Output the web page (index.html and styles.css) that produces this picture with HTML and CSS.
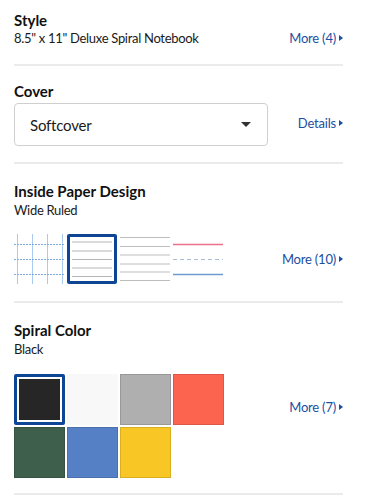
FILE: index.html
```html
<!DOCTYPE html>
<html lang="en">
<head>
  <meta charset="UTF-8">
  <meta name="viewport" content="width=device-width, initial-scale=1.0">
  <title>Notebook Options</title>
  <link rel="stylesheet" href="styles.css">
</head>
<body>
  <main class="options">
    <section class="option">
      <h2>Style</h2>
      <div class="option-row">
        <p class="value">8.5" x 11" Deluxe Spiral Notebook</p>
        <a class="more-link" href="#">More (4)<span class="arrow"></span></a>
      </div>
    </section>

    <section class="option cover">
      <h2>Cover</h2>
      <div class="option-row">
        <div class="select-box">
          <span>Softcover</span>
          <span class="caret"></span>
        </div>
        <a class="more-link" href="#">Details<span class="arrow"></span></a>
      </div>
    </section>

    <section class="option paper-design">
      <h2>Inside Paper Design</h2>
      <p class="value">Wide Ruled</p>
      <div class="option-row">
        <div class="paper-list">
          <!-- graph -->
          <div class="paper">
            <svg width="50" height="50" viewBox="0 0 50 50">
              <g stroke="#a9cbef" stroke-width="1">
                <line x1="3.5" y1="0" x2="3.5" y2="50"/>
                <line x1="18.5" y1="0" x2="18.5" y2="50"/>
                <line x1="33.5" y1="0" x2="33.5" y2="50"/>
                <line x1="48.5" y1="0" x2="48.5" y2="50"/>
              </g>
              <g stroke="#7fa9da" stroke-width="1" stroke-dasharray="2 1">
                <line x1="0" y1="10.5" x2="50" y2="10.5"/>
                <line x1="0" y1="25.5" x2="50" y2="25.5"/>
                <line x1="0" y1="40.5" x2="50" y2="40.5"/>
              </g>
            </svg>
          </div>
          <!-- wide ruled -->
          <div class="paper selected">
            <svg width="44" height="44" viewBox="0 0 44 44">
              <g stroke="#b5b5b5" stroke-width="1.2">
                <line x1="2" y1="5" x2="42" y2="5"/>
                <line x1="2" y1="14" x2="42" y2="14"/>
                <line x1="2" y1="22.5" x2="42" y2="22.5"/>
                <line x1="2" y1="31" x2="42" y2="31"/>
                <line x1="2" y1="39.5" x2="42" y2="39.5"/>
              </g>
            </svg>
          </div>
          <!-- college ruled -->
          <div class="paper">
            <svg width="50" height="50" viewBox="0 0 50 50">
              <g stroke="#bdbdbd" stroke-width="1.2">
                <line x1="0" y1="3.5" x2="50" y2="3.5"/>
                <line x1="0" y1="12.5" x2="50" y2="12.5"/>
                <line x1="0" y1="21" x2="50" y2="21"/>
                <line x1="0" y1="30" x2="50" y2="30"/>
                <line x1="0" y1="38" x2="50" y2="38"/>
                <line x1="0" y1="46.5" x2="50" y2="46.5"/>
              </g>
            </svg>
          </div>
          <!-- primary -->
          <div class="paper">
            <svg width="50" height="50" viewBox="0 0 50 50">
              <line x1="0" y1="10.5" x2="50" y2="10.5" stroke="#e9708a" stroke-width="1.5"/>
              <line x1="0" y1="25.5" x2="50" y2="25.5" stroke="#a9bfd9" stroke-width="1.2" stroke-dasharray="4 3"/>
              <line x1="0" y1="40.5" x2="50" y2="40.5" stroke="#6f9bcf" stroke-width="1.5"/>
            </svg>
          </div>
        </div>
        <a class="more-link" href="#">More (10)<span class="arrow"></span></a>
      </div>
    </section>

    <section class="option spiral">
      <h2>Spiral Color</h2>
      <p class="value">Black</p>
      <div class="option-row">
        <div class="swatch-grid">
          <div class="swatch selected"><span class="fill black"></span></div>
          <div class="swatch"><span class="fill white"></span></div>
          <div class="swatch"><span class="fill gray"></span></div>
          <div class="swatch"><span class="fill red"></span></div>
          <div class="swatch"><span class="fill green"></span></div>
          <div class="swatch"><span class="fill blue"></span></div>
          <div class="swatch"><span class="fill yellow"></span></div>
        </div>
        <a class="more-link" href="#">More (7)<span class="arrow"></span></a>
      </div>
    </section>
  </main>
</body>
</html>
```

FILE: styles.css
```css
body {
  margin: 0;
  padding: 0;
  background-color: #fff;
  color: #1a1a1a;
  font-family: Lato, "Noto Sans", sans-serif;
}
.options {
  padding: 0 24px 0 14px;
}
.option {
  border-bottom: 2px solid #ebebeb;
  padding: 11px 0 17px;
}
.option + .option {
  padding-top: 16px;
}
.option h2 {
  margin: 0;
  font-size: 15px;
  line-height: 18px;
  font-weight: 700;
  color: #111;
}
.option .value {
  margin: 2px 0 0;
  font-size: 13px;
  line-height: 17px;
  letter-spacing: -0.3px;
}
.option-row {
  display: flex;
  align-items: center;
  justify-content: space-between;
}
.option-row .value {
  margin-top: 1px;
}
.more-link {
  display: flex;
  align-items: center;
  color: #1b4f9f;
  font-size: 13px;
  letter-spacing: -0.2px;
  text-decoration: none;
}
.arrow {
  width: 0;
  height: 0;
  margin-left: 3px;
  border-top: 3.5px solid transparent;
  border-bottom: 3.5px solid transparent;
  border-left: 4px solid #1b4f9f;
}
.select-box {
  display: flex;
  align-items: center;
  justify-content: space-between;
  width: 254px;
  height: 43px;
  box-sizing: border-box;
  margin-top: 3px;
  padding: 0 16px 0 15px;
  border: 1px solid #cfcfcf;
  border-radius: 4px;
  font-size: 15px;
  letter-spacing: -0.2px;
}
.cover {
  padding-bottom: 16px;
}
.caret {
  width: 0;
  height: 0;
  border-left: 5px solid transparent;
  border-right: 5px solid transparent;
  border-top: 5px solid #333;
}
.option.paper-design,
.option.spiral {
  padding-top: 18px;
}
.paper-list {
  display: flex;
  gap: 3px;
  margin-top: 15px;
}
.paper-design .more-link {
  margin-top: 15px;
}
.paper {
  width: 50px;
  height: 50px;
  box-sizing: border-box;
  display: flex;
  align-items: center;
  justify-content: center;
}
.paper.selected {
  border: 3px solid #0e4595;
  border-radius: 2px;
}
.spiral .option-row {
  align-items: flex-start;
}
.spiral .more-link {
  margin-top: 41px;
}
.spiral {
  padding-bottom: 15px;
}
.swatch-grid {
  display: grid;
  grid-template-columns: repeat(4, 51px);
  gap: 2px;
  margin-top: 16px;
}
.swatch {
  width: 51px;
  height: 51px;
  box-sizing: border-box;
  display: flex;
}
.swatch .fill {
  flex: 1;
  border: 1px solid rgba(0, 0, 0, 0.12);
}
.swatch.selected {
  border: 3px solid #0e4595;
  border-radius: 2px;
  padding: 2px;
}
.swatch.selected .fill {
  border: none;
}
.black { background-color: #262626; }
.white { background-color: #f8f8f8; border-color: #f8f8f8 !important; }
.gray { background-color: #afafaf; }
.red { background-color: #fd6450; }
.green { background-color: #3e5f4b; }
.blue { background-color: #5580c6; }
.yellow { background-color: #f8c726; }
```
